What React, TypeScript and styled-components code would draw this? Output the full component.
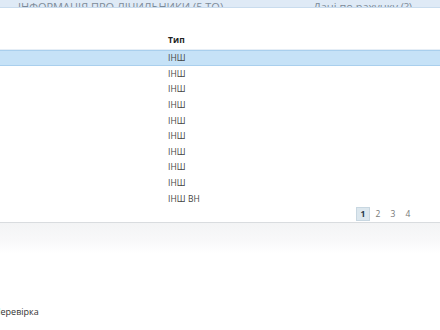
import React from "react";
import styled, { createGlobalStyle } from "styled-components";

const GlobalStyle = createGlobalStyle`
  html, body {
    margin: 0;
    padding: 0;
    background: #ffffff;
    overflow: hidden;
  }
  body {
    font-family: "Open Sans", "DejaVu Sans", sans-serif;
    font-size: 9px;
    color: #333;
  }
`;

const Page = styled.div`
  width: 440px;
  height: 330px;
  display: flex;
  flex-direction: column;
  overflow: hidden;
`;

const TitleBar = styled.div`
  height: 7px;
  background: #dfeaf6;
  border-bottom: 1px solid #c9dcee;
  display: flex;
  align-items: flex-end;
  overflow: hidden;
  padding-left: 18px;
  gap: 80px;
`;

const TitleText = styled.span`
  font-size: 11px;
  line-height: 11px;
  margin-bottom: -5px;
  color: #7d8b99;
  white-space: nowrap;
`;

const Badge = styled.span`
  display: inline-block;
  width: 8px;
  height: 4px;
  margin-left: 2px;
  background: #e8d98a;
`;

const Table = styled.div`
  margin-top: 23px;
  display: flex;
  flex-direction: column;
`;

const Row = styled.div<{ $selected?: boolean; $head?: boolean }>`
  display: grid;
  grid-template-columns: 168px 1fr;
  height: ${(p) => (p.$head ? "19px" : "15.6px")};
  padding-bottom: ${(p) => (p.$head ? "3px" : "0")};
  align-items: center;
  background: ${(p) => (p.$selected ? "#c6e2f7" : "transparent")};
  border-top: 1px solid ${(p) => (p.$selected ? "#a9cfed" : "transparent")};
  border-bottom: 1px solid ${(p) => (p.$selected ? "#a9cfed" : p.$head ? "#e6eef6" : "transparent")};
  box-sizing: border-box;
  font-weight: ${(p) => (p.$head ? 700 : 400)};
  color: ${(p) => (p.$head ? "#222" : "#444")};
`;

const Cell = styled.div`
  white-space: nowrap;
  font-size: 8.5px;
  letter-spacing: 0.1px;
`;

const Pager = styled.div`
  display: flex;
  justify-content: flex-end;
  padding-right: 25px;
  gap: 1px;
  margin-top: 1px;
  height: 15px;
  border-bottom: 1px solid #d9dcdf;
`;

const PageBtn = styled.span<{ $active?: boolean }>`
  width: 14px;
  height: 14px;
  display: flex;
  align-items: center;
  justify-content: center;
  font-size: 8.5px;
  font-weight: ${(p) => (p.$active ? 700 : 400)};
  color: ${(p) => (p.$active ? "#2a3a48" : "#777")};
  background: ${(p) => (p.$active ? "#dce7ee" : "transparent")};
  border: 1px solid ${(p) => (p.$active ? "#c8d7e1" : "transparent")};
  box-sizing: border-box;
`;

const Lower = styled.div`
  flex: 1;
  background: linear-gradient(#f3f4f5 0px, #f8f8f9 16px, #ffffff 30px);
  display: flex;
  flex-direction: column;
  padding-top: 82px;
`;

const Label = styled.span`
  font-size: 9px;
  color: #333;
  margin-left: -6px;
`;

const rows = ["ІНШ", "ІНШ", "ІНШ", "ІНШ", "ІНШ", "ІНШ", "ІНШ", "ІНШ", "ІНШ", "ІНШ ВН"];

export default function App() {
  return (
    <Page>
      <GlobalStyle />
      <TitleBar>
        <TitleText>
          ІНФОРМАЦІЯ ПРО ЛІЧИЛЬНИКИ (5 ТО)
          <Badge />
        </TitleText>
        <TitleText>Дані по рахунку (?)</TitleText>
      </TitleBar>
      <Table>
        <Row $head>
          <span />
          <Cell>Тип</Cell>
        </Row>
        {rows.map((r, i) => (
          <Row key={i} $selected={i === 0}>
            <span />
            <Cell>{r}</Cell>
          </Row>
        ))}
      </Table>
      <Pager>
        {[1, 2, 3, 4].map((n) => (
          <PageBtn key={n} $active={n === 1}>
            {n}
          </PageBtn>
        ))}
      </Pager>
      <Lower>
        <Label>Перевірка</Label>
      </Lower>
    </Page>
  );
}
